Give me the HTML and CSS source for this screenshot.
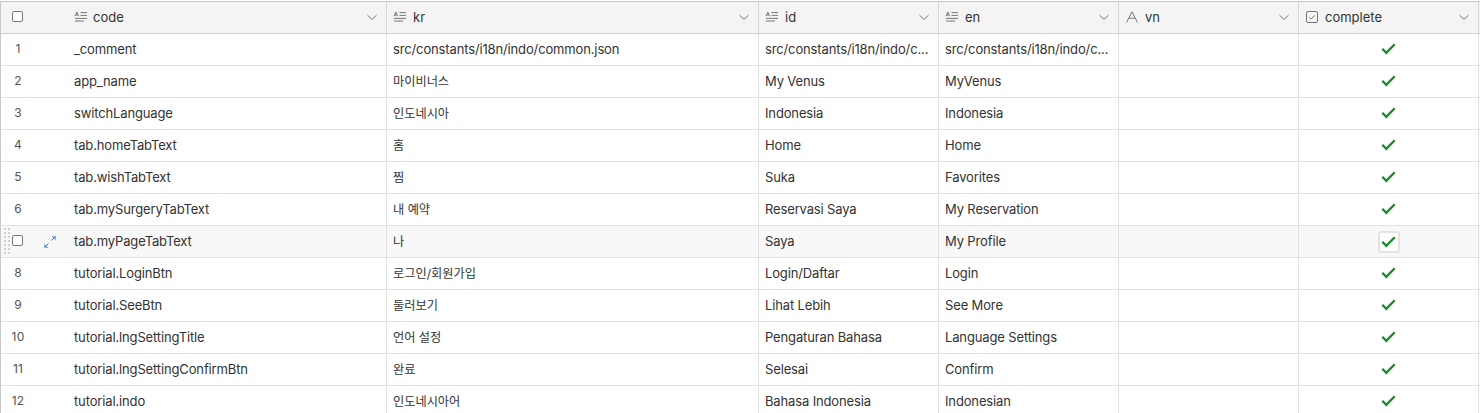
FILE: index.html
```html
<!DOCTYPE html>
<html lang="en">
<head>
<meta charset="utf-8">
<title>Grid</title>
<link rel="stylesheet" href="styles.css">
</head>
<body>
<svg width="0" height="0" class="defs">
<defs>
<symbol id="i-long" viewBox="0 0 14 14"><path d="M1 6.2 2.8 2 4.6 6.2M1.6 5h2.4M6.5 2.6H13M6.5 5.4H13M1 8.4H13M1 11H10" fill="none" stroke="currentColor" stroke-width="1"/></symbol>
<symbol id="i-chev" viewBox="0 0 12 12"><path d="M1.5 4.2 6 8.4 10.5 4.2" fill="none" stroke="currentColor" stroke-width="1"/></symbol>
<symbol id="i-a" viewBox="0 0 14 14"><path d="M1.5 12.5 7 1.8 12.5 12.5M4 8.2H10" fill="none" stroke="currentColor" stroke-width="1"/></symbol>
<symbol id="i-box" viewBox="0 0 14 14"><rect x="1.5" y="1.5" width="11" height="11" rx="1.5" fill="none" stroke="currentColor" stroke-width="1"/><path d="M4.3 7.2 6.2 9.1 9.8 5.3" fill="none" stroke="currentColor" stroke-width="1"/></symbol>
<symbol id="i-check" viewBox="0 0 14 12"><path d="M1.2 6.2 5 10 12.8 2" fill="none" stroke="currentColor" stroke-width="2.2"/></symbol>
<symbol id="i-expand" viewBox="0 0 12 12"><path d="M7.4 0H12V4.6ZM4.6 12H0V7.4Z" fill="currentColor" opacity=".55"/><path d="M10.6 1.4 7.6 4.4M1.4 10.6 4.4 7.6" fill="none" stroke="currentColor" stroke-width="1"/></symbol>
</defs>
</svg>
<div class="grid">
  <div class="row head">
    <div class="lead"><span class="box"></span></div>
    <div class="cell c-code"><svg class="ti"><use href="#i-long"/></svg><span class="name">code</span><svg class="chev"><use href="#i-chev"/></svg></div>
    <div class="cell c-kr"><svg class="ti"><use href="#i-long"/></svg><span class="name">kr</span><svg class="chev"><use href="#i-chev"/></svg></div>
    <div class="cell c-w"><svg class="ti"><use href="#i-long"/></svg><span class="name">id</span><svg class="chev"><use href="#i-chev"/></svg></div>
    <div class="cell c-w"><svg class="ti"><use href="#i-long"/></svg><span class="name">en</span><svg class="chev"><use href="#i-chev"/></svg></div>
    <div class="cell c-w"><svg class="ti"><use href="#i-a"/></svg><span class="name">vn</span><svg class="chev"><use href="#i-chev"/></svg></div>
    <div class="cell c-w"><svg class="ti"><use href="#i-box"/></svg><span class="name">complete</span><svg class="chev"><use href="#i-chev"/></svg></div>
  </div>
  <div class="row"><div class="lead"><span class="num">1</span></div><div class="cell c-code">_comment</div><div class="cell c-kr">src/constants/i18n/indo/common.json</div><div class="cell c-w">src/constants/i18n/indo/c...</div><div class="cell c-w">src/constants/i18n/indo/c...</div><div class="cell c-w"></div><div class="cell c-w mid"><svg class="chk"><use href="#i-check"/></svg></div></div>
  <div class="row"><div class="lead"><span class="num">2</span></div><div class="cell c-code">app_name</div><div class="cell c-kr ko">마이비너스</div><div class="cell c-w">My Venus</div><div class="cell c-w">MyVenus</div><div class="cell c-w"></div><div class="cell c-w mid"><svg class="chk"><use href="#i-check"/></svg></div></div>
  <div class="row"><div class="lead"><span class="num">3</span></div><div class="cell c-code">switchLanguage</div><div class="cell c-kr ko">인도네시아</div><div class="cell c-w">Indonesia</div><div class="cell c-w">Indonesia</div><div class="cell c-w"></div><div class="cell c-w mid"><svg class="chk"><use href="#i-check"/></svg></div></div>
  <div class="row"><div class="lead"><span class="num">4</span></div><div class="cell c-code">tab.homeTabText</div><div class="cell c-kr ko">홈</div><div class="cell c-w">Home</div><div class="cell c-w">Home</div><div class="cell c-w"></div><div class="cell c-w mid"><svg class="chk"><use href="#i-check"/></svg></div></div>
  <div class="row"><div class="lead"><span class="num">5</span></div><div class="cell c-code">tab.wishTabText</div><div class="cell c-kr ko">찜</div><div class="cell c-w">Suka</div><div class="cell c-w">Favorites</div><div class="cell c-w"></div><div class="cell c-w mid"><svg class="chk"><use href="#i-check"/></svg></div></div>
  <div class="row"><div class="lead"><span class="num">6</span></div><div class="cell c-code">tab.mySurgeryTabText</div><div class="cell c-kr ko">내 예약</div><div class="cell c-w">Reservasi Saya</div><div class="cell c-w">My Reservation</div><div class="cell c-w"></div><div class="cell c-w mid"><svg class="chk"><use href="#i-check"/></svg></div></div>
  <div class="row hover"><div class="lead"><span class="dots"></span><span class="box"></span><svg class="expand"><use href="#i-expand"/></svg></div><div class="cell c-code">tab.myPageTabText</div><div class="cell c-kr ko">나</div><div class="cell c-w">Saya</div><div class="cell c-w">My Profile</div><div class="cell c-w"></div><div class="cell c-w mid"><span class="chkbox"><svg class="chk"><use href="#i-check"/></svg></span></div></div>
  <div class="row"><div class="lead"><span class="num">8</span></div><div class="cell c-code">tutorial.LoginBtn</div><div class="cell c-kr ko">로그인/회원가입</div><div class="cell c-w">Login/Daftar</div><div class="cell c-w">Login</div><div class="cell c-w"></div><div class="cell c-w mid"><svg class="chk"><use href="#i-check"/></svg></div></div>
  <div class="row"><div class="lead"><span class="num">9</span></div><div class="cell c-code">tutorial.SeeBtn</div><div class="cell c-kr ko">둘러보기</div><div class="cell c-w">Lihat Lebih</div><div class="cell c-w">See More</div><div class="cell c-w"></div><div class="cell c-w mid"><svg class="chk"><use href="#i-check"/></svg></div></div>
  <div class="row"><div class="lead"><span class="num">10</span></div><div class="cell c-code">tutorial.lngSettingTitle</div><div class="cell c-kr ko">언어 설정</div><div class="cell c-w">Pengaturan Bahasa</div><div class="cell c-w">Language Settings</div><div class="cell c-w"></div><div class="cell c-w mid"><svg class="chk"><use href="#i-check"/></svg></div></div>
  <div class="row"><div class="lead"><span class="num">11</span></div><div class="cell c-code">tutorial.lngSettingConfirmBtn</div><div class="cell c-kr ko">완료</div><div class="cell c-w">Selesai</div><div class="cell c-w">Confirm</div><div class="cell c-w"></div><div class="cell c-w mid"><svg class="chk"><use href="#i-check"/></svg></div></div>
  <div class="row"><div class="lead"><span class="num">12</span></div><div class="cell c-code">tutorial.indo</div><div class="cell c-kr ko">인도네시아어</div><div class="cell c-w">Bahasa Indonesia</div><div class="cell c-w">Indonesian</div><div class="cell c-w"></div><div class="cell c-w mid"><svg class="chk"><use href="#i-check"/></svg></div></div>
</div>
</body>
</html>
```
FILE: styles.css
```css
html, body { margin: 0; padding: 0; background: #fff; height: 413px; overflow: hidden; }
.defs { position: absolute; }
.grid {
  width: 1479px;
  border-top: 1px solid #c8c8c8;
  border-left: 1px solid #c8c8c8;
  margin-top: 1px;
  font-family: Inter, "Noto Sans CJK KR", sans-serif;
  font-size: 13px;
  letter-spacing: -0.14px;
  color: #333;
}
.row { display: flex; height: 32px; border-bottom: 1px solid #e1e1e1; box-sizing: border-box; }
.head { background: #f4f4f4; border-bottom: 1px solid #d0d0d0; }
.hover { background: #f8f8f8; }
.lead { width: 67px; flex: none; display: flex; align-items: center; position: relative; box-sizing: border-box; padding-bottom: 2px; }
.num { width: 34px; text-align: center; font-size: 12px; letter-spacing: 0.2px; color: #555; }
.box { width: 9px; height: 9px; border: 1px solid #777; border-radius: 2px; background: #fff; margin-left: 11px; }
.dots {
  position: absolute; left: 2px; top: 1px; width: 8px; height: 28px;
  background-image: radial-gradient(circle, #cfcfcf 1px, transparent 1.1px);
  background-size: 4px 4px;
}
.expand { width: 12px; height: 12px; color: #1f6fe0; margin-left: 21px; margin-top: 3px; }
.cell {
  display: flex; align-items: center; box-sizing: border-box;
  padding: 0 6px 2px; border-right: 1px solid #e1e1e1; white-space: nowrap; overflow: hidden;
}
.head .cell { border-right-color: #d8d8d8; }
.c-code { width: 319px; }
.c-kr { width: 372px; }
.c-w { width: 180px; }
.ko { font-size: 12.2px; letter-spacing: 0; }
.mid { justify-content: center; }
.ti { width: 14px; height: 14px; color: #777; margin-right: 6px; flex: none; }
.c-code .ti { margin-right: 5px; }
.name { flex: 1; letter-spacing: 0; }
.chev { width: 12px; height: 12px; color: #777; flex: none; margin-right: 2px; }
.chk { width: 15px; height: 13px; color: #1b8a28; flex: none; }
.chkbox {
  width: 22px; height: 22px; margin-top: 2px; border: 2px solid #e3e3e3; border-radius: 3px; background: #fff;
  display: flex; align-items: center; justify-content: center; box-sizing: border-box;
}
```
